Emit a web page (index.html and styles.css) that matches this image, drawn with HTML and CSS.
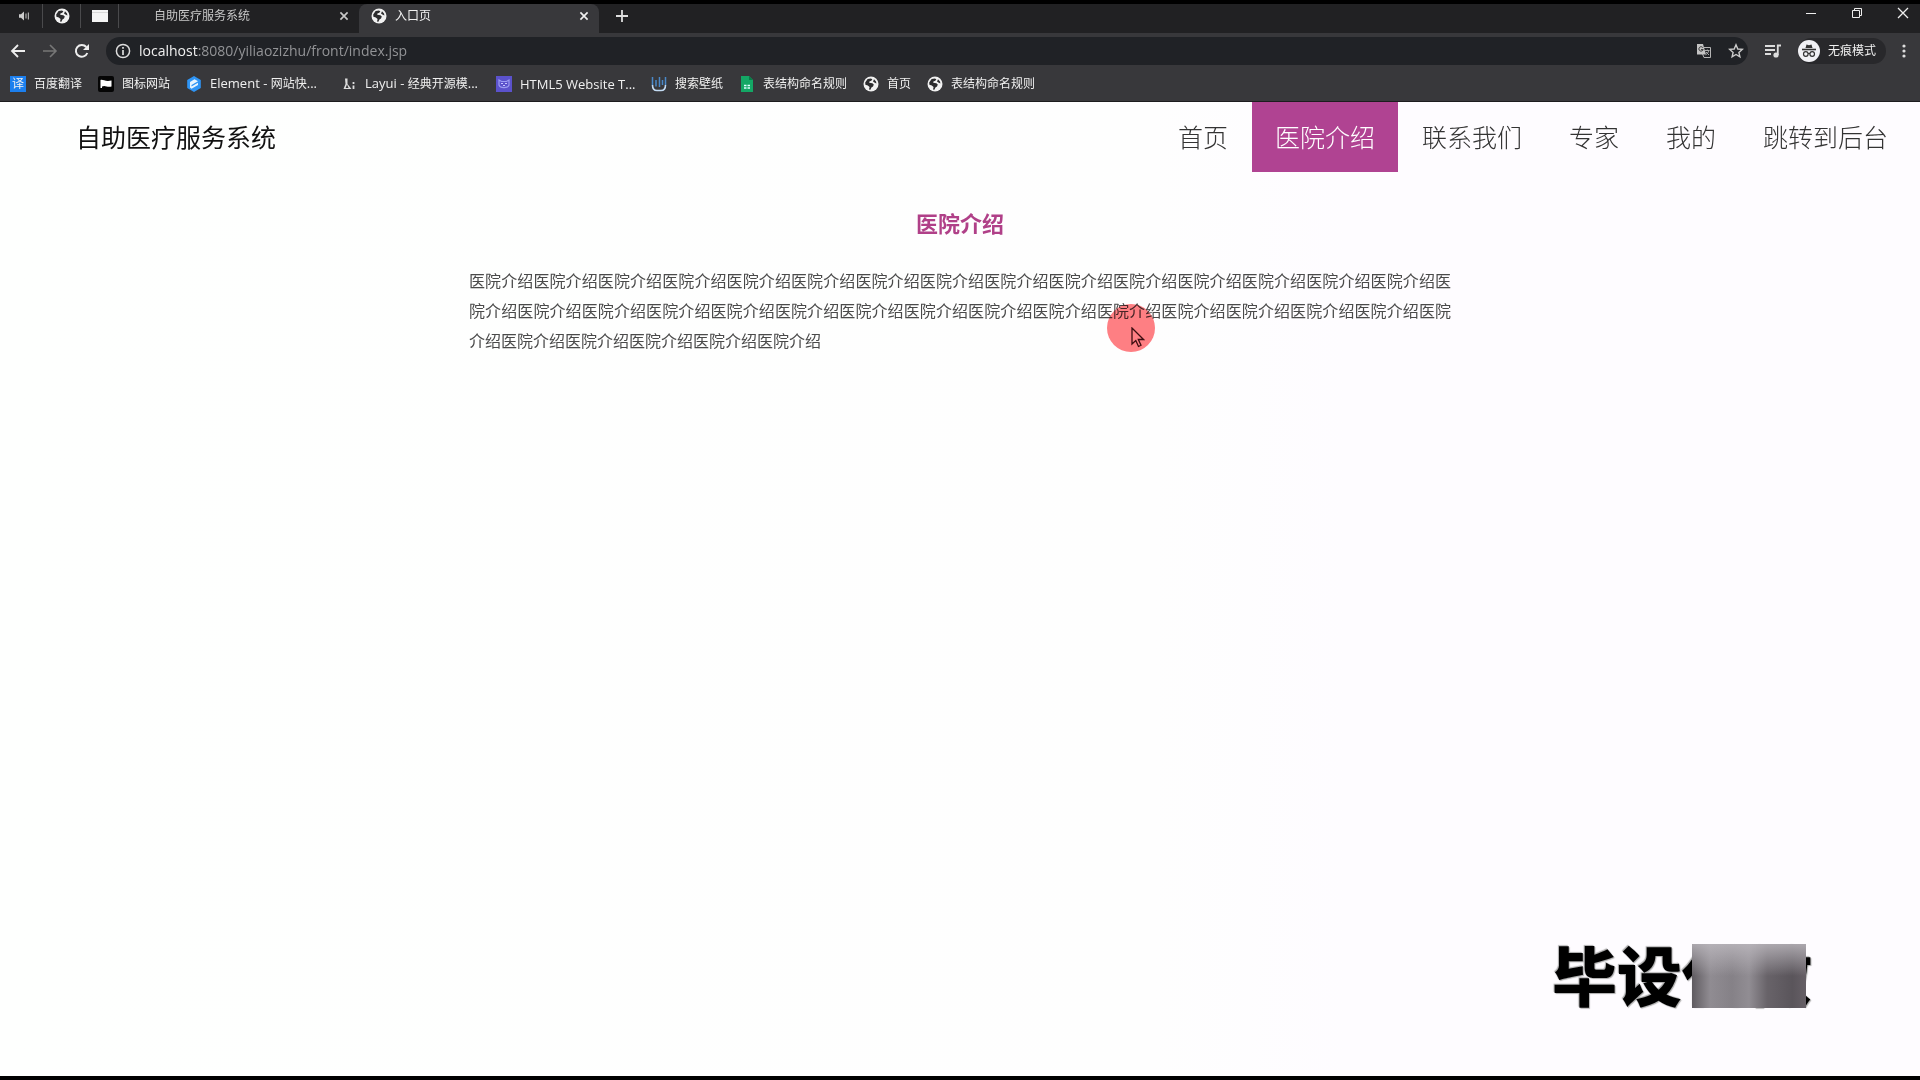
FILE: index.html
```html
<!DOCTYPE html>
<html lang="zh-CN">
<head>
<meta charset="utf-8">
<title>入口页</title>
<link rel="stylesheet" href="styles.css">
</head>
<body>
<svg class="defs" width="0" height="0" aria-hidden="true">
  <symbol id="globe" viewBox="0 0 16 16"><circle cx="8" cy="8" r="7.5" fill="#f1f1f1"/><path d="M4.6 3 8 2.4 9.4 3.6 8 5 6.6 5.2 6.2 6.8 9.4 7.2 10.8 8.6 10 10.6 8.4 11.6 7.4 13.8 6 13.4 6.6 11 4.8 9.6 2.4 8.8 2.2 6.4Z" fill="#2b2b2d"/><path d="M11 3.2 13 5.4 13.4 7.4 11.4 6.4 10 5.4Z" fill="#2b2b2d"/></symbol>
  <symbol id="close" viewBox="0 0 10 10"><path d="M2 2 8 8M8 2 2 8" stroke="currentColor" stroke-width="1.4" fill="none"/></symbol>
</svg>

<header class="browser">
  <div class="tabstrip">
    <button class="pin" aria-label="声音"><svg width="12" height="12" viewBox="0 0 12 12"><path d="M1 4.2H3L6 1.6V10.4L3 7.8H1Z" fill="#ccc"/><path d="M8 3.4V8.6M10.4 2.4V9.6" stroke="#aaa" stroke-width="1.2"/></svg></button>
    <button class="pin" aria-label="网页"><svg width="16" height="16"><use href="#globe"/></svg></button>
    <button class="pin" aria-label="窗口"><svg width="18" height="14" viewBox="0 0 18 14"><rect x="1" y="1" width="16" height="12" fill="#f4f4f4"/><path d="M1 3.500H17" stroke="#d8d8d8"/></svg></button>
    <div class="tab"><span class="tab-title">自助医疗服务系统</span><button class="tab-close" aria-label="关闭标签页"><svg width="12" height="12"><use href="#close"/></svg></button></div>
    <div class="tab tab-active"><svg width="16" height="16"><use href="#globe"/></svg><span class="tab-title">入口页</span><button class="tab-close" aria-label="关闭标签页"><svg width="12" height="12"><use href="#close"/></svg></button></div>
    <button class="new-tab" aria-label="新标签页"><svg width="14" height="14" viewBox="0 0 14 14"><path d="M7 1V13M1 7H13" stroke="#ddd" stroke-width="1.8"/></svg></button>
    <div class="window-buttons">
      <button aria-label="最小化"><svg width="12" height="12" viewBox="0 0 12 12"><path d="M1 6.500H11" stroke="#eee"/></svg></button>
      <button aria-label="还原"><svg width="12" height="12" viewBox="0 0 12 12"><path d="M1.500 3.500H8.500V10.500H1.500ZM3.500 3V1.500H10.500V8.500H9" fill="none" stroke="#eee"/></svg></button>
      <button aria-label="关闭"><svg width="12" height="12" viewBox="0 0 12 12"><path d="M1 1 11 11M11 1 1 11" stroke="#eee" stroke-width="1.3"/></svg></button>
    </div>
  </div>

  <div class="toolbar">
    <button aria-label="后退"><svg width="16" height="16" viewBox="0 0 16 16"><path d="M15 8H2M8 2 2 8 8 14" fill="none" stroke="#eee" stroke-width="1.8"/></svg></button>
    <button aria-label="前进"><svg width="16" height="16" viewBox="0 0 16 16"><path d="M1 8H14M8 2 14 8 8 14" fill="none" stroke="#777" stroke-width="1.6"/></svg></button>
    <button aria-label="刷新"><svg width="16" height="16" viewBox="0 0 16 16"><path d="M13.300 10A5.900 5.900 0 1 1 12.300 4" fill="none" stroke="#eee" stroke-width="2"/><path d="M15 1V7H9Z" fill="#eee"/></svg></button>
    <div class="address">
      <svg width="16" height="16" viewBox="0 0 16 16"><circle cx="8" cy="8" r="6.600" fill="none" stroke="#ddd" stroke-width="1.500"/><path d="M8 7V12M8 4V5.700" stroke="#ddd" stroke-width="1.700"/></svg>
      <span class="url"><b>localhost</b>:8080/yiliaozizhu/front/index.jsp</span>
      <button aria-label="翻译"><svg width="16" height="16" viewBox="0 0 16 16"><path d="M6 4.500H14.500V14.500H8L6.500 11" fill="none" stroke="#b5b5b5"/><path d="M1 1H7L10 11.500H1Z" fill="#c4c4c4"/><path d="M7 4.800A2.200 2.200 0 1 0 7.200 6.600H5" fill="none" stroke="#333"/><path d="M9 7.500H13.500M11.300 6.500V7.500M12.800 7.500C12.400 9.400 11 11 9.800 12M10 9 13 12" fill="none" stroke="#aaa"/></svg></button>
      <button aria-label="收藏"><svg width="16" height="16" viewBox="0 0 16 16"><path d="M8 1.800 9.800 6 14.300 6.400 10.900 9.400 11.900 13.800 8 11.500 4.100 13.800 5.100 9.400 1.700 6.400 6.200 6Z" fill="none" stroke="#ccc" stroke-width="1.400"/></svg></button>
    </div>
    <button aria-label="媒体控制"><svg width="18" height="16" viewBox="0 0 18 16"><path d="M1 3H11M1 7H11M1 11H7" stroke="#ddd" stroke-width="1.800"/><path d="M13.800 12V2.500H17" fill="none" stroke="#ddd" stroke-width="1.800"/><circle cx="12" cy="12" r="2.600" fill="#ddd"/></svg></button>
    <button class="incognito"><svg width="22" height="22" viewBox="0 0 22 22"><circle cx="11" cy="11" r="11" fill="#f1f1f5"/><path d="M7.500 8 8.500 4.500 11 5.200 13.500 4.500 14.500 8Z" fill="#333"/><path d="M4 9.500H18" stroke="#333" stroke-width="1.600"/><circle cx="7.800" cy="14" r="2.300" fill="none" stroke="#333" stroke-width="1.200"/><circle cx="14.200" cy="14" r="2.300" fill="none" stroke="#333" stroke-width="1.200"/><path d="M10 13.500H12" stroke="#333"/></svg><span>无痕模式</span></button>
    <button aria-label="菜单"><svg width="4" height="16" viewBox="0 0 4 16"><circle cx="2" cy="3" r="1.600" fill="#ddd"/><circle cx="2" cy="8" r="1.600" fill="#ddd"/><circle cx="2" cy="13" r="1.600" fill="#ddd"/></svg></button>
  </div>

  <nav class="bookmarks" aria-label="书签">
    <a href="#"><span class="fanyi">译</span>百度翻译</a>
    <a href="#"><svg width="16" height="16" viewBox="0 0 16 16"><rect width="16" height="16" rx="2" fill="#050505"/><path d="M2.500 4C5 3 7 6 13.500 4.500V10.500C9 11.500 7 8.800 4 10.500V12H2.500Z" fill="#fff"/></svg>图标网站</a>
    <a class="clipped" href="#"><svg width="16" height="16" viewBox="0 0 16 16"><path d="M8 0 14.800 4V12L8 16 1.200 12V4Z" fill="#2f95f5"/><path d="M4 6 8.500 3.300 12 5.200 5.500 9V10.500L12 6.800V9L5.500 12.800 4 11.500Z" fill="#e8f5ff"/></svg><span><span class="latin">Element - </span>网站快<span class="latin">...</span></span></a>
    <a class="clipped" href="#"><svg width="16" height="16" viewBox="0 0 16 16"><path d="M4 2.500H6.500V8L10.500 13H2.500L4.500 8Z" fill="#ddd"/><path d="M6 8.500 7.600 12H4.600Z" fill="#38383b"/><path d="M12.500 6V8M12.500 9.500V13" stroke="#ddd" stroke-width="1.800"/></svg><span><span class="latin">Layui - </span>经典开源模<span class="latin">...</span></span></a>
    <a class="clipped" href="#"><svg width="16" height="16" viewBox="0 0 16 16"><rect width="16" height="16" fill="#5b52cc"/><path d="M3 4 5.500 5.500H10.500L13 4V9C12 12.500 4 12.500 3 9Z" fill="none" stroke="#9c9cf2" stroke-width="1.200"/><path d="M5 7.500H7M9 7.500H11M7 9.500H9" stroke="#c8c6ff"/></svg><span class="latin">HTML5 Website T...</span></a>
    <a href="#"><svg width="16" height="16" viewBox="0 0 16 16"><path d="M1.500 9C1.500 12.500 3 14.500 6 14.500H10C13 14.500 14.500 12.500 14.500 9" fill="none" stroke="#c4dcf4" stroke-width="1.600"/><path d="M1.500 1V9M5 4V10.500M8.500 1V11M11.500 4V9M14.500 1V9" stroke="#4a88c8" stroke-width="1.500"/></svg>搜索壁纸</a>
    <a href="#"><svg width="16" height="16" viewBox="0 0 16 16"><path d="M2 0H10L14 4V16H2Z" fill="#14a765"/><path d="M10 0 14 4H10Z" fill="#087c48"/><path d="M5 9.500H7.500M8.500 9.500H11M5 12H7.500M8.500 12H11" stroke="#dff" stroke-width="1.400"/></svg>表结构命名规则</a>
    <a href="#"><svg width="16" height="16"><use href="#globe"/></svg>首页</a>
    <a href="#"><svg width="16" height="16"><use href="#globe"/></svg>表结构命名规则</a>
  </nav>
</header>

<div class="page">
  <header class="site-header">
    <a class="brand" href="#">自助医疗服务系统</a>
    <nav class="site-nav">
      <a href="#">首页</a>
      <a class="current" href="#">医院介绍</a>
      <a href="#">联系我们</a>
      <a href="#">专家</a>
      <a href="#">我的</a>
      <a href="#">跳转到后台</a>
    </nav>
  </header>
  <main class="article">
    <h1>医院介绍</h1>
    <p>医院介绍医院介绍医院介绍医院介绍医院介绍医院介绍医院介绍医院介绍医院介绍医院介绍医院介绍医院介绍医院介绍医院介绍医院介绍医院介绍医院介绍医院介绍医院介绍医院介绍医院介绍医院介绍医院介绍医院介绍医院介绍医院介绍医院介绍医院介绍医院介绍医院介绍医院介绍医院介绍医院介绍医院介绍医院介绍医院介绍</p>
  </main>
  <div class="watermark">毕设代做<span class="mosaic"></span></div>
  <div class="click-spot"></div>
  <svg class="pointer" width="14" height="22" viewBox="0 0 14 22"><path d="M1 1V17L4.800 13.500 7.500 19.500 10 18.300 7.300 12.500H12.500Z" fill="#ff7f84" stroke="#3c0d10" stroke-width="1.300"/></svg>
</div>
</body>
</html>
```
FILE: styles.css
```css
* { box-sizing: border-box; }

body {
  margin: 0;
  min-height: 100vh;
  display: flex;
  flex-direction: column;
  border-top: 4px solid #000;
  border-bottom: 4px solid #000;
  background: #fefefe;
  font-family: "Open Sans", "Noto Sans CJK SC", sans-serif;
}

.defs { position: absolute; }
a { color: inherit; text-decoration: none; }
svg { display: block; flex: none; }

button {
  display: flex;
  align-items: center;
  justify-content: center;
  padding: 0;
  border: 0;
  background: none;
  color: inherit;
  font: inherit;
}

.browser {
  background: #38383b;
  color: #f0f0f0;
  font-size: 12px;
  line-height: 16px;
  border-bottom: 1px solid #1c1c1e;
}

.tabstrip {
  display: flex;
  height: 29px;
  padding-left: 5px;
  background: #212123;
}

.pin {
  width: 38px;
  height: 24px;
  border-right: 1px solid #4a4a4c;
}

.tab {
  display: flex;
  align-items: center;
  width: 240px;
  padding: 0 9px 5px 35px;
  gap: 8px;
  color: #c8c8c8;
}

.tab-active {
  padding-left: 12px;
  border-radius: 8px 8px 0 0;
  background: #38383b;
  color: #f0f0f0;
}

.tab-title { flex: 1; }
.new-tab { width: 46px; height: 24px; }

.window-buttons { display: flex; gap: 12px; margin-left: auto; }
.window-buttons button { width: 34px; height: 18px; }

.toolbar {
  display: flex;
  align-items: center;
  height: 36px;
  padding: 0 14px 0 10px;
  gap: 16px;
}

.address {
  display: flex;
  flex: 1;
  align-items: center;
  gap: 8px;
  height: 28px;
  padding: 0 4px 0 9px;
  border-radius: 14px;
  background: #202226;
}

.address button { margin-left: 8px; }

.url {
  flex: 1;
  color: #929396;
  font-size: 14px;
  line-height: 20px;
}

.url b { color: #f0f0f0; font-weight: 400; }

.incognito {
  height: 26px;
  padding-right: 10px;
  gap: 8px;
  border-radius: 13px;
  background: #28282b;
}

.bookmarks {
  display: flex;
  align-items: center;
  height: 32px;
  padding: 0 10px 3px;
  gap: 16px;
}

.bookmarks a { display: flex; align-items: center; gap: 8px; white-space: nowrap; }
.bookmarks .clipped { width: 139px; }
.latin { font-size: 13px; white-space: pre; }

.fanyi {
  width: 16px;
  background: #1c7fee;
  text-align: center;
}

.page { position: relative; flex: 1; background: linear-gradient(90deg, #fefffe, #fefefe 60%, #fefcff 70%); }

.site-header {
  display: flex;
  justify-content: space-between;
  align-items: flex-start;
  padding: 0 9px 0 76px;
  font-size: 25px;
  line-height: 70px;
}

.brand { color: #111; }
.site-nav { display: flex; gap: 1px; color: #333; font-weight: 300; }
.site-nav a { padding: 0 23px; }
.site-nav .current { background: #b04392; color: #fff; }

.article {
  max-width: 982px;
  margin: 0 auto;
  padding-top: 35px;
}

.article h1 {
  margin: 0 0 27px;
  color: #b04088;
  font-size: 22px;
  line-height: 32px;
  text-align: center;
}

.article p {
  margin: 0;
  color: #4a4a4a;
  font-size: 16px;
  line-height: 30px;
  text-align: justify;
}

.watermark {
  position: absolute;
  right: 108px;
  bottom: 64px;
  color: #000;
  font-size: 65px;
  font-weight: 900;
  line-height: 72px;
  text-shadow: 1px 1px 1px #aaa, -1px -1px 1px #aaa;
}

.mosaic {
  position: absolute;
  top: 4px;
  right: 6px;
  width: 114px;
  height: 64px;
  background:
    linear-gradient(180deg, rgba(190, 186, 192, 0.8), rgba(150, 146, 152, 0) 50%),
    linear-gradient(90deg, #5f5b60, #908c92 16%, #858187 35%, #918d93 50%, #686369 66%, #5a555b 88%, #665f66);
}

.click-spot {
  position: absolute;
  top: 202px;
  left: 1107px;
  width: 48px;
  height: 48px;
  border-radius: 50%;
  background: #ff7f84;
  mix-blend-mode: multiply;
}

.pointer {
  position: absolute;
  top: 225px;
  left: 1131px;
}
```
